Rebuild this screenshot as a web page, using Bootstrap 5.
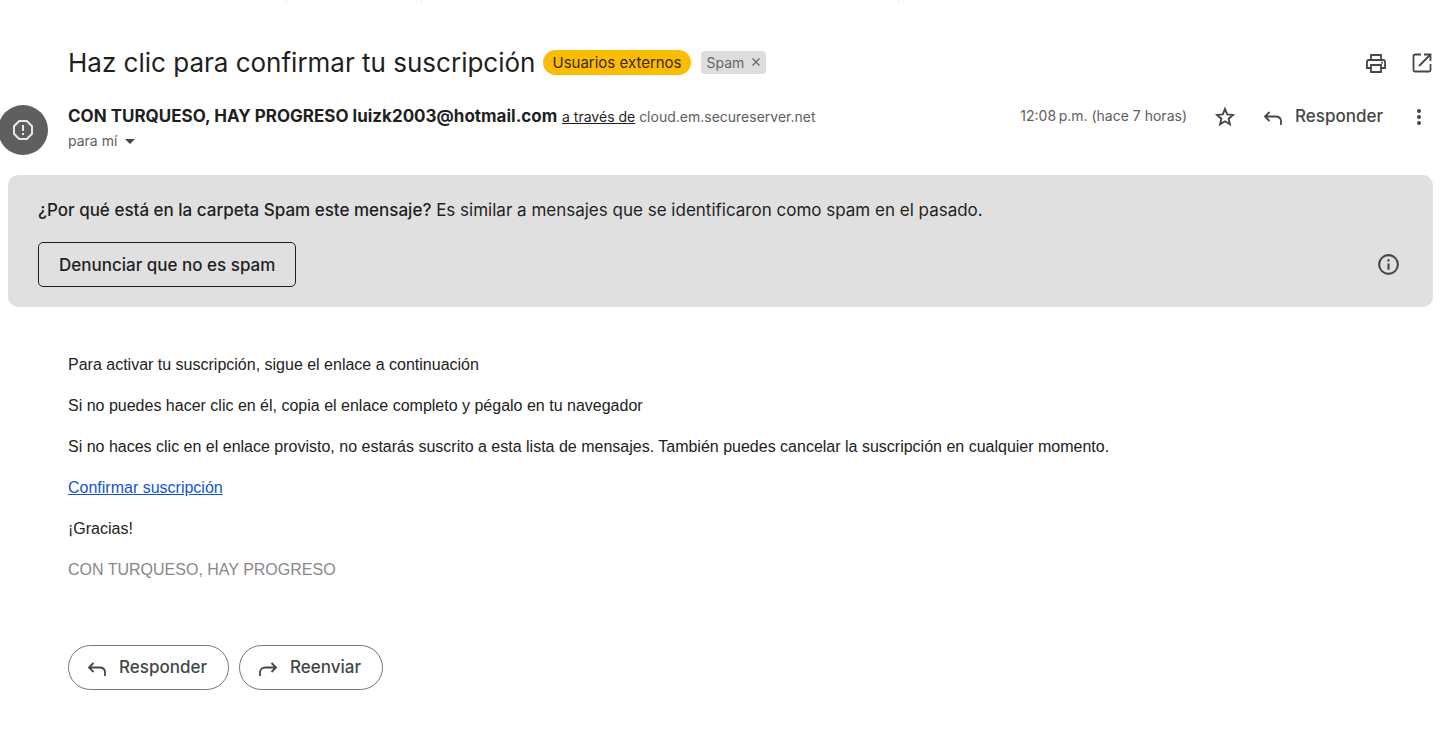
<!DOCTYPE html>
<html lang="es">
<head>
<meta charset="utf-8">
<meta name="viewport" content="width=device-width, initial-scale=1">
<title>Haz clic para confirmar tu suscripción</title>
<link href="https://cdn.jsdelivr.net/npm/bootstrap@5.3.0/dist/css/bootstrap.min.css" rel="stylesheet">
<style>
  :root { --ink: #1f1f1f; --soft: #5e5e5e; --icon: #444746; }
  body { font-family: "Google Sans", Inter, sans-serif; color: var(--ink); background: #fff; font-size: 17px; line-height: 24px; }
  svg { display: block; flex: none; fill: currentColor; }
  .tool { --bs-btn-color: var(--icon); --bs-btn-padding-x: 0; --bs-btn-padding-y: 0; --bs-btn-border-width: 0; --bs-btn-font-size: 17px; --bs-btn-line-height: 24px; }
  .medium { font-weight: 500; }
  .strip { display: grid; grid-template-columns: 199fr 94fr 331fr 376fr; height: 3px; }
  .strip i { width: 1px; justify-self: end; background: #eee; }
  .inset { padding-left: 60px; }
  .title-row { padding-top: 42px; }
  .subject { font-size: 26px; line-height: 36px; }
  .tags { gap: 10px; margin-left: 8px; padding-bottom: 2px; }
  .tag-ext { background: #fbbc04; color: #3c2a00; font-size: 15px; line-height: 25px; padding: 0 9px; }
  .tag-spam { background: #ddd; color: #666; font-size: 14px; line-height: 23px; padding: 0 6px; border-radius: 4px; gap: 8px; }
  .sender-row { margin-top: 23px; }
  .avatar { width: 50px; height: 50px; margin: 1px 20px 0 -10px; background: #5f5f5f; color: #e8e8e8; }
  .small-text { font-size: 14px; color: var(--soft); }
  .small-text a { color: var(--ink); }
  .message-tools { gap: 26px; }
  .notice { background: #e0e0e0; border-radius: 10px; padding: 23px 32px 20px 30px; margin-top: 20px; }
  .btn-report { --bs-btn-color: var(--ink); --bs-btn-border-color: var(--ink); --bs-btn-font-size: 17px; --bs-btn-line-height: 24px; --bs-btn-padding-x: 20px; --bs-btn-border-radius: 5px; --bs-btn-font-weight: 500; height: 45px; }
  .mail-text { font-family: "Liberation Sans", Arial, sans-serif; font-size: 16px; line-height: 24px; color: #222; margin-top: 46px; }
  .mail-text p { margin-bottom: 17px; }
  .mail-text a { color: #15c; }
  .mail-sign { color: #888; }
  .replies { gap: 10px; margin-top: 63px; }
  .with-icon { display: flex; align-items: center; gap: 12px; }
  .btn-pill { --bs-btn-color: var(--icon); --bs-btn-border-color: #747775; --bs-btn-border-radius: 23px; --bs-btn-font-size: 17px; --bs-btn-line-height: 24px; --bs-btn-font-weight: 500; height: 45px; padding: 0 21px 2px 18px; }
</style>
</head>
<body>
<svg class="d-none" aria-hidden="true">
  <symbol id="reply" viewBox="0 0 20 20"><path d="M6.500 6L2 10.500 6.500 15M2 10.500h10.500c3.500 0 5.500 2 5.500 5V19" fill="none" stroke="currentColor" stroke-width="1.800"/></symbol>
  <symbol id="forward" viewBox="0 0 20 20"><path d="M13.500 6L18 10.500 13.500 15M18 10.500H7.500C4 10.500 2 12.500 2 15.500V19" fill="none" stroke="currentColor" stroke-width="1.800"/></symbol>
</svg>
<div class="strip" aria-hidden="true"><i></i><i></i><i></i></div>
<main class="px-2 pb-5">
  <header>
    <div class="title-row inset d-flex align-items-center justify-content-between">
      <div class="d-flex align-items-center">
        <h1 class="subject fw-normal mb-0">Haz clic para confirmar tu suscripción</h1>
        <div class="tags d-flex align-items-center">
          <span class="tag-ext rounded-pill">Usuarios externos</span>
          <span class="tag-spam d-flex align-items-center">Spam
            <button type="button" class="btn tool" aria-label="Quitar etiqueta Spam"><svg width="8" height="8" viewBox="0 0 8 8"><path d="M.5.5l7 7M7.500.5l-7 7" stroke="#666" stroke-width="1.300"/></svg></button>
          </span>
        </div>
      </div>
      <div class="d-flex align-items-center gap-4 flex-shrink-0">
        <button type="button" class="btn tool" aria-label="Imprimir"><svg width="24" height="24" viewBox="0 0 24 24"><path d="M7 8V4h10v4M7 17H3v-6a2 2 0 0 1 2-2h14a2 2 0 0 1 2 2v6h-4M7 14h10v7H7z" fill="none" stroke="currentColor" stroke-width="1.800"/><circle cx="18" cy="11.800" r="1"/></svg></button>
        <button type="button" class="btn tool" aria-label="Abrir en una ventana nueva"><svg width="21" height="24" viewBox="2 0 21 24"><path d="M11 3.500H5A1.500 1.500 0 0 0 3.500 5v14A1.500 1.500 0 0 0 5 20.500h14a1.500 1.500 0 0 0 1.500-1.500v-6M14 3.500h6.500V10M20.500 3.500L9 15" fill="none" stroke="currentColor" stroke-width="1.800"/></svg></button>
      </div>
    </div>
    <div class="sender-row d-flex align-items-start">
      <div class="avatar rounded-circle d-flex align-items-center justify-content-center flex-shrink-0">
        <svg width="24" height="24" viewBox="0 0 24 24" role="img" aria-label="Spam"><path d="M8.200 3h7.600L21 8.200v7.600L15.800 21H8.200L3 15.800V8.200z" fill="none" stroke="currentColor" stroke-width="2"/><path d="M11 7h2v6h-2zM11 15h2v2h-2z"/></svg>
      </div>
      <div class="flex-grow-1">
        <div><b>CON TURQUESO, HAY PROGRESO luizk2003@hotmail.com</b> <span class="small-text"><a href="#">a través de</a> cloud.em.secureserver.net</span></div>
        <button type="button" class="btn tool d-flex align-items-center gap-2"><span class="small-text">para mí</span><svg width="10" height="5" viewBox="0 0 10 5"><path d="M0 0h10L5 5z"/></svg></button>
      </div>
      <div class="message-tools d-flex align-items-center flex-shrink-0">
        <time class="small-text">12:08&#8239;p.m. (hace 7 horas)</time>
        <button type="button" class="btn tool" aria-label="Destacar"><svg width="24" height="24" viewBox="0 -1 24 24"><path d="M12 4l2.200 5.400 5.700.5-4.300 3.800 1.300 5.600-4.900-3-4.900 3 1.300-5.600-4.300-3.800 5.700-.5z" fill="none" stroke="currentColor" stroke-width="1.900"/></svg></button>
        <button type="button" class="btn tool with-icon"><svg width="20" height="20"><use href="#reply"/></svg><span class="medium">Responder</span></button>
        <button type="button" class="btn tool" aria-label="Más"><svg width="24" height="24" viewBox="2 -1 24 24"><circle cx="12" cy="6" r="2"/><circle cx="12" cy="12" r="2"/><circle cx="12" cy="18" r="2"/></svg></button>
      </div>
    </div>
  </header>
  <section class="notice">
    <p class="mb-0"><span class="medium">¿Por qué está en la carpeta Spam este mensaje?</span> Es similar a mensajes que se identificaron como spam en el pasado.</p>
    <div class="d-flex align-items-center justify-content-between mt-3 pt-1">
      <button type="button" class="btn btn-report">Denunciar que no es spam</button>
      <button type="button" class="btn tool" aria-label="Más información"><svg width="25" height="25" viewBox="0 0 24 24"><circle cx="12" cy="12" r="9" fill="none" stroke="currentColor" stroke-width="2"/><path d="M11 11h2v6h-2zM11 7h2v2h-2z"/></svg></button>
    </div>
  </section>
  <article class="mail-text inset">
    <p>Para activar tu suscripción, sigue el enlace a continuación</p>
    <p>Si no puedes hacer clic en él, copia el enlace completo y pégalo en tu navegador</p>
    <p>Si no haces clic en el enlace provisto, no estarás suscrito a esta lista de mensajes. También puedes cancelar la suscripción en cualquier momento.</p>
    <p><a href="#">Confirmar suscripción</a></p>
    <p>¡Gracias!</p>
    <p class="mail-sign mb-0">CON TURQUESO, HAY PROGRESO</p>
  </article>
  <div class="replies inset d-flex">
    <button type="button" class="btn btn-pill with-icon"><svg width="20" height="20"><use href="#reply"/></svg>Responder</button>
    <button type="button" class="btn btn-pill with-icon"><svg width="20" height="20"><use href="#forward"/></svg>Reenviar</button>
  </div>
</main>
<script src="https://cdn.jsdelivr.net/npm/bootstrap@5.3.0/dist/js/bootstrap.bundle.min.js"></script>
</body>
</html>
